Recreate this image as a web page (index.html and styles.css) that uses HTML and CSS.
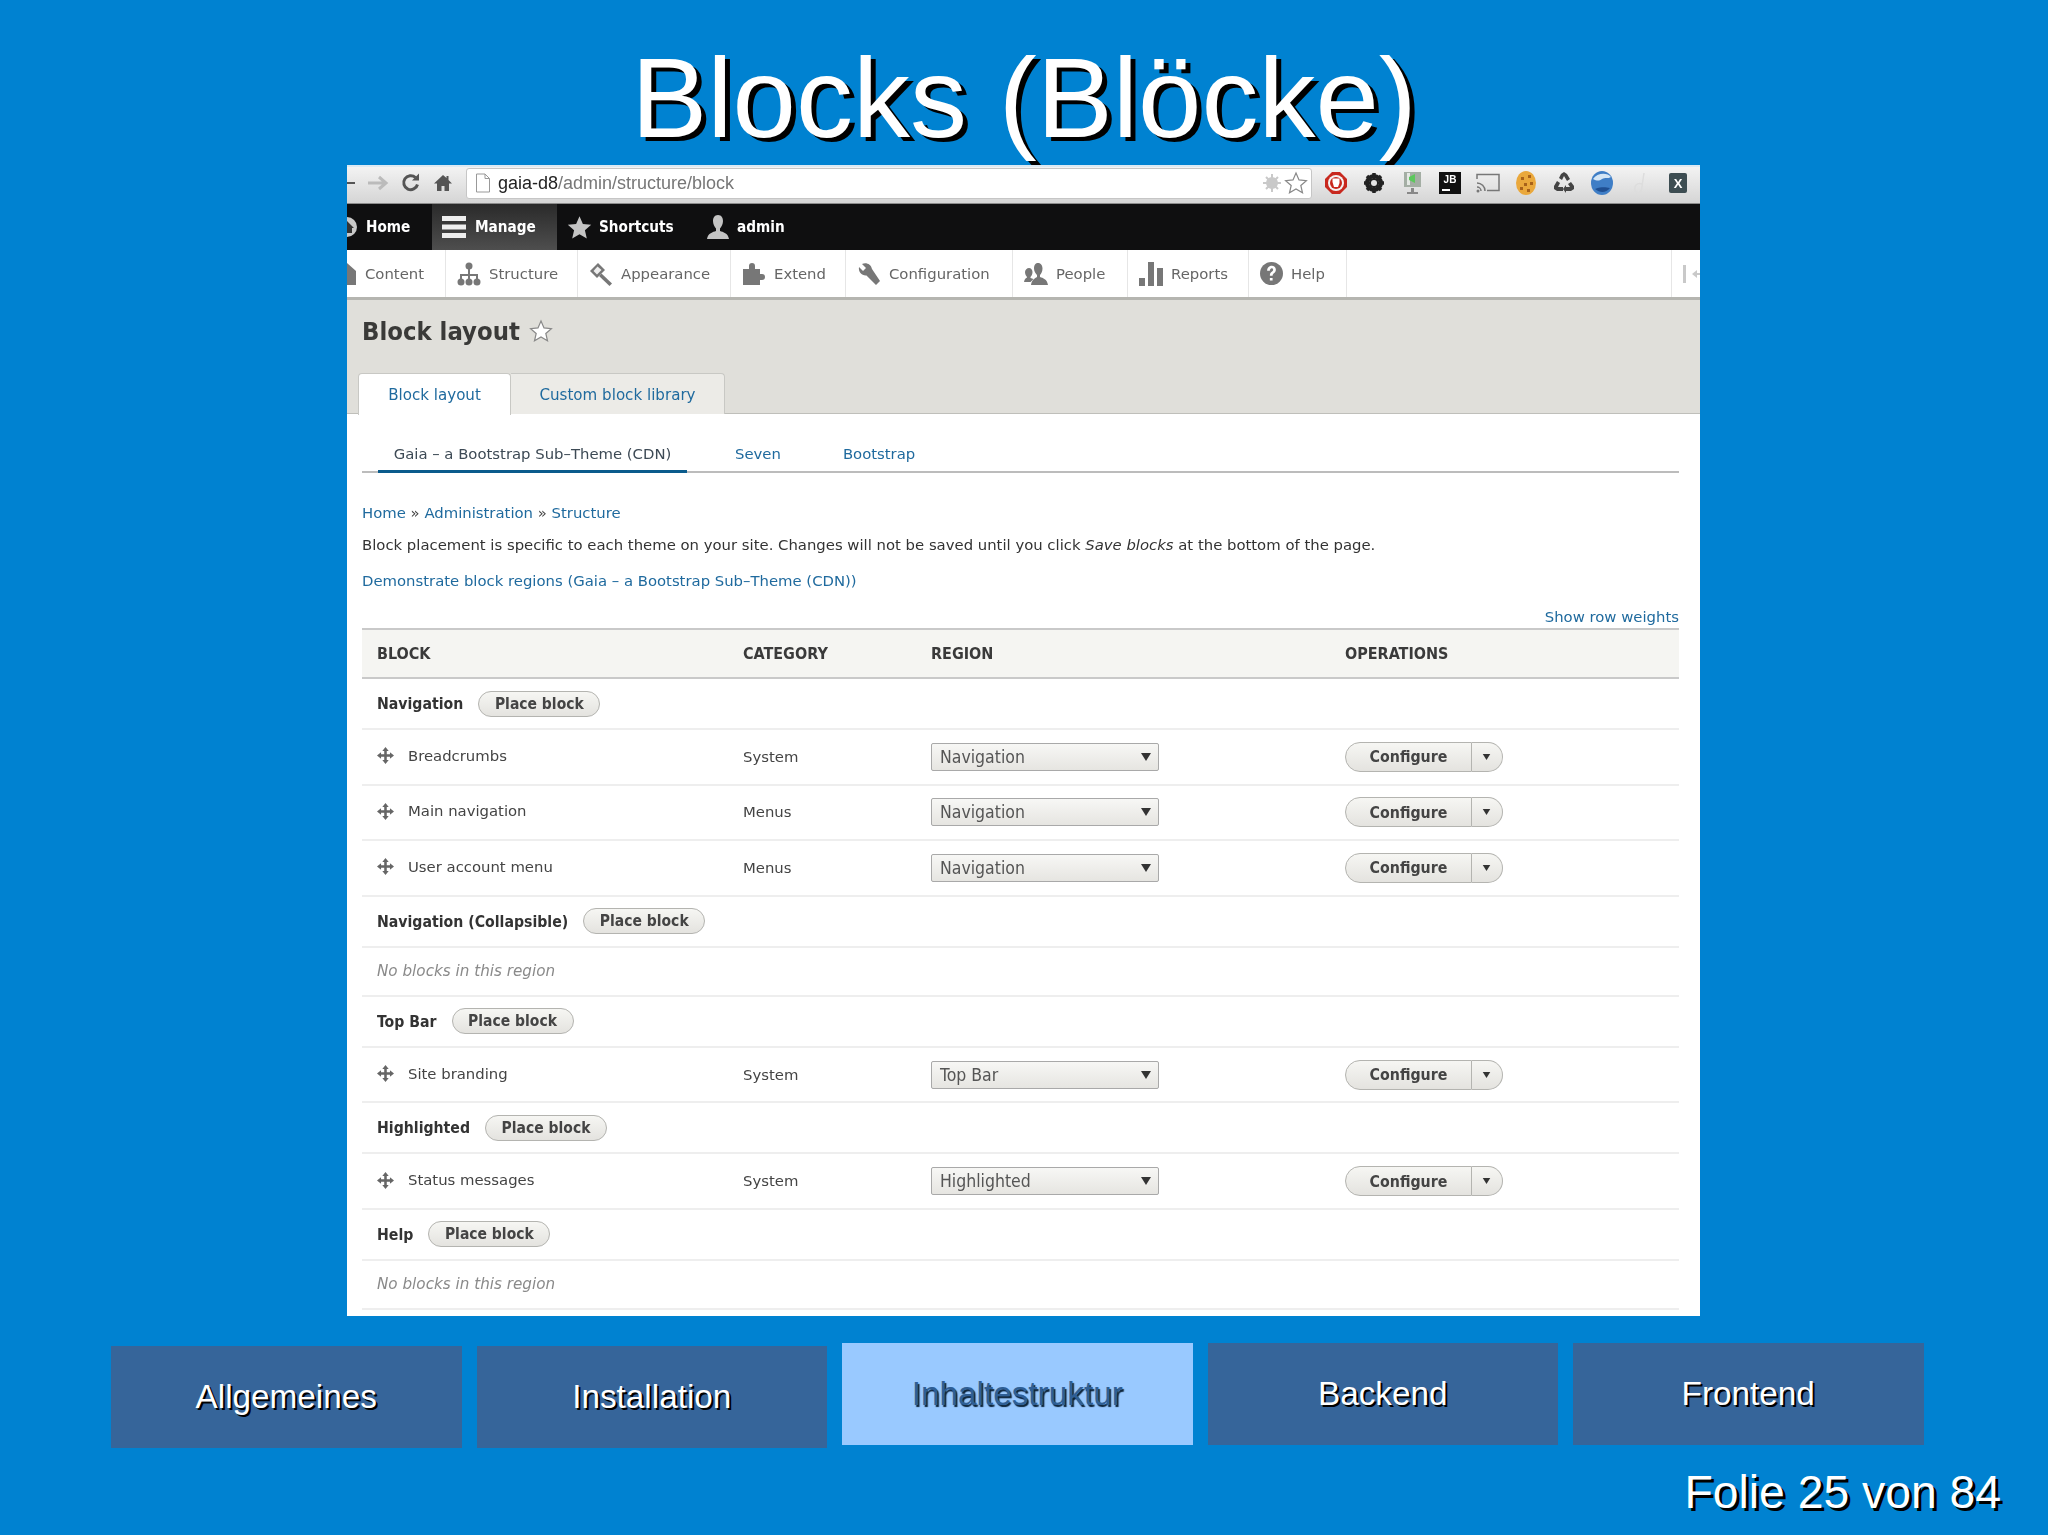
FILE: index.html
```html
<!DOCTYPE html>
<html lang="de">
<head>
<meta charset="utf-8">
<title>Blocks (Blöcke)</title>
<link rel="stylesheet" href="styles.css">
</head>
<body>
<svg class="defs" width="0" height="0" aria-hidden="true">
  <symbol id="drag" viewBox="0 0 16 16"><path d="M8 0l3 3.800H9.200v3H12.200V5l3.800 3-3.800 3V9.200H9.200v3H11L8 16l-3-3.800h1.800v-3H3.800V11L0 8l3.800-3v1.800h3v-3H5z" fill="#666"/></symbol>
  <symbol id="tri" viewBox="0 0 10 8"><path d="M0 0h10L5 8z" fill="#333"/></symbol>
  <symbol id="star" viewBox="0 0 24 24"><path d="M12 2l3 6.900 7.400.7-5.600 4.900 1.700 7.300L12 17.900l-6.500 3.900 1.700-7.300-5.600-4.900L9 8.900z"/></symbol>
</svg>
<main class="slide">
  <h1 class="title">Blocks (Blöcke)</h1>
  <section class="shot">
    <div class="chrome">
      <div class="nav-btns">
        <svg class="ic-cut" width="8" height="14" viewBox="0 0 8 14"><path d="M0 6h8v2H0z" fill="#555"/></svg>
        <svg width="22" height="18" viewBox="0 0 22 18"><path d="M1 9h17M12 3l7 6-7 6" fill="none" stroke="#bbb" stroke-width="3"/></svg>
        <svg width="20" height="20" viewBox="0 0 20 20"><path d="M16.500 11.500A7 7 0 1 1 14.500 4.500" fill="none" stroke="#555" stroke-width="3"/><path d="M11 7.500h7v-7z" fill="#555"/></svg>
        <svg width="20" height="20" viewBox="0 0 20 20"><path d="M10 2L1 10.500h3V18h4.500v-5h3v5H16v-7.500h3L15.500 7V3h-2v2z" fill="#555"/></svg>
      </div>
      <div class="url">
        <svg width="16" height="20" viewBox="0 0 16 20"><path d="M1.500 1h8.500l4.500 4.500V19h-13zM10 1v4.500h4.500" fill="#fff" stroke="#999"/></svg>
        <span class="url-text"><b class="url-host">gaia-d8</b>/admin/structure/block</span>
        <svg class="url-end" width="20" height="20" viewBox="0 0 20 20"><circle cx="10" cy="10" r="6" fill="#c9c9c9"/><path d="M10 1v18M1 10h18M4 4l12 12M16 4L4 16" stroke="#c9c9c9" stroke-width="2"/></svg>
        <svg class="star-o" width="24" height="24"><use href="#star"/></svg>
      </div>
      <div class="exts">
        <svg width="24" height="24" viewBox="0 0 24 24"><path d="M8 1h8l7 7v8l-7 7H8l-7-7V8z" fill="#c8281e"/><circle cx="12" cy="12" r="8" fill="#f3f3f3"/><circle cx="12" cy="12" r="6" fill="#c8281e"/><path d="M8.500 11V7.500h7V12l-1.500 4h-4z" fill="#fff"/></svg>
        <svg width="24" height="24" viewBox="0 0 24 24"><circle cx="12" cy="12" r="7" fill="none" stroke="#222" stroke-width="4"/><path d="M12 2v20M2 12h20M5 5l14 14M19 5L5 19" stroke="#222" stroke-width="3.500"/><circle cx="12" cy="12" r="3" fill="#e4e4e4"/></svg>
        <svg width="24" height="26" viewBox="0 0 24 26"><path d="M4 2h17v15H4z" fill="#a4aea4"/><path d="M7 3h3v12H7z" fill="#e4e8e4"/><path d="M9 7l6-3v9l-6-3z" fill="#5cc85c"/><path d="M11 18h3v4h4v2H7v-2h4z" fill="#888"/></svg>
        <svg width="22" height="22" viewBox="0 0 22 22"><path d="M0 0h22v22H0z" fill="#111"/><path d="M3 17h8v2H3z" fill="#fff"/><text class="jb" x="11" y="11" text-anchor="middle">JB</text></svg>
        <svg width="24" height="20" viewBox="0 0 24 20"><path d="M1 6V1.500h22v16H11" fill="none" stroke="#777" stroke-width="1.500"/><path d="M1 10a8 8 0 0 1 8 8M1 14a4 4 0 0 1 4 4" fill="none" stroke="#777" stroke-width="1.500"/><circle cx="2" cy="18" r="1.500" fill="#777"/></svg>
        <svg width="22" height="26" viewBox="0 0 22 26"><ellipse cx="11" cy="13" rx="10" ry="12" fill="#eaa83c"/><path d="M6 7h3v3H6zM13 5h3v3h-3zM9 13h3v3H9zM15 12h3v3h-3zM5 17h3v3H5zM12 19h3v3h-3z" fill="#a8621a"/></svg>
        <svg width="24" height="24" viewBox="0 0 24 24"><path d="M9 3l3-2 3 2 3 5-3 2-3-5-2 4-3-2zM2 15l3-5 3 2-2 4h5v4H5l-3-2zM22 15l-3-4-3 2 2 3h-4v-2l-3 4 3 4v-2h5l3-2z" fill="#444"/></svg>
        <svg width="24" height="26" viewBox="0 0 24 26"><ellipse cx="12" cy="13" rx="11" ry="12" fill="#3f7ec6"/><path d="M3 9c4-6 14-7 18-2-3 2-6 0-9 2s-5 2-9 0z" fill="#d5e6f5"/><path d="M5 19c5 4 11 4 15-1-4 0-6-2-15 1z" fill="#1f4f92"/></svg>
        <svg width="14" height="24" viewBox="0 0 14 24"><path d="M11 2L8 22M9 13C4 11 1 15 2 19s5 3 6 0" fill="none" stroke="#ddd" stroke-width="1.500"/></svg>
        <span class="ext-x">X</span>
      </div>
    </div>

    <nav class="toolbar">
      <a class="tb home"><svg class="tb-cut" width="20" height="20" viewBox="0 0 20 20"><circle cx="10" cy="10" r="10" fill="#c9c9c9"/><path d="M10 4l7 7h-2v5H5v-5H3z" fill="#333"/></svg>Home</a>
      <a class="tb manage"><svg width="24" height="22" viewBox="0 0 24 22"><path d="M0 0h24v5H0zM0 8.500h24v5H0zM0 17h24v5H0z" fill="#eee"/></svg>Manage</a>
      <a class="tb shortcuts"><svg class="tb-star" width="27" height="27"><use href="#star"/></svg>Shortcuts</a>
      <a class="tb user"><svg width="24" height="24" viewBox="0 0 24 24"><path d="M12 0c3.500 0 5 3 5 6 0 3-1.500 6-3 7.500V16c3 1 8 2 9 8H1c1-6 6-7 9-8v-2.500C8.500 12 7 9 7 6c0-3 1.500-6 5-6z" fill="#c4c4c4"/></svg>admin</a>
    </nav>

    <nav class="menu">
      <a class="mi first"><svg width="9" height="22" viewBox="0 0 9 22"><path d="M0 0l9 8v14H0z" fill="#777"/></svg>Content</a>
      <a class="mi"><svg width="24" height="24" viewBox="0 0 24 24"><circle cx="12" cy="4" r="3.500" fill="#777"/><path d="M11 4h2v8h8v7h-2v-5h-6v5h-2v-5H5v5H3v-7h8z" fill="#777"/><circle cx="4" cy="20" r="3.500" fill="#777"/><circle cx="12" cy="20" r="3.500" fill="#777"/><circle cx="20" cy="20" r="3.500" fill="#777"/></svg>Structure</a>
      <a class="mi"><svg width="24" height="24" viewBox="0 0 24 24"><path d="M9 1L1 9l7 7 8-8z" fill="#777"/><path d="M8.500 4.500L4.500 9 8 12.500 12.500 8z" fill="#eee"/><path d="M12.500 11.500L23 21.500 20.500 24 10 14z" fill="#777"/></svg>Appearance</a>
      <a class="mi"><svg width="24" height="24" viewBox="0 0 24 24"><path d="M1 7h6V4a3 3 0 0 1 6 0v3h5v5h2a3 3 0 0 1 0 6h-2v5H1z" fill="#777"/></svg>Extend</a>
      <a class="mi"><svg width="24" height="24" viewBox="0 0 24 24"><path d="M2 5l4 4 3-3-4-4c4-2 9 0 10 5L23 19l-4 4L9.500 13.500C5 14 1 10 2 5z" fill="#777"/></svg>Configuration</a>
      <a class="mi"><svg width="24" height="24" viewBox="0 0 24 24"><path d="M14 1c3 0 4.500 2.500 4.500 5.500S17 12 16 13v2c3 1 7 2 8 8H7c.6-5 4-7 6-8v-2c-1-1-3-3.500-3-6.500S11 1 14 1z" fill="#777"/><path d="M5 6c2 0 3.500 2 3.500 4s-1 4-2 5v1l3 1-3 3H0c.5-3 2-4 3-4.500V15c-1-1-2-3-2-5s2-4 4-4z" fill="#777"/></svg>People</a>
      <a class="mi"><svg width="24" height="24" viewBox="0 0 24 24"><path d="M0 16h6v8H0zM9 0h6v24H9zM18 6h6v18h-6z" fill="#777"/></svg>Reports</a>
      <a class="mi"><svg width="23" height="23" viewBox="0 0 21 21"><circle cx="10.500" cy="10.500" r="10.500" fill="#777"/><path d="M6.500 8c0-6 8-6 8-1 0 3-3 3-3 5.500H9c0-4 3-3.500 3-5.500 0-2-3-2-3 1zM9 14.500h2.500V17H9z" fill="#fff"/></svg>Help</a>
      <span class="mi-spacer"></span>
      <span class="mi-end"><svg width="22" height="20" viewBox="0 0 22 20"><path d="M2 1h3v18H2zM16 6v3h6v2h-6v3l-5-4z" fill="#c9c9c9"/></svg></span>
    </nav>

    <header class="page-head">
      <div class="page-title"><h2>Block layout</h2><svg class="star-o star-title" width="24" height="24"><use href="#star"/></svg></div>
      <ul class="tabs">
        <li class="tab active">Block layout</li>
        <li class="tab">Custom block library</li>
      </ul>
    </header>

    <div class="content">
      <ul class="subtabs">
        <li class="subtab active">Gaia – a Bootstrap Sub–Theme (CDN)</li>
        <li class="subtab">Seven</li>
        <li class="subtab">Bootstrap</li>
      </ul>
      <p class="crumbs"><a>Home</a> » <a>Administration</a> » <a>Structure</a></p>
      <p class="intro">Block placement is specific to each theme on your site. Changes will not be saved until you click <em>Save blocks</em> at the bottom of the page.</p>
      <p class="demo"><a>Demonstrate block regions (Gaia – a Bootstrap Sub–Theme (CDN))</a></p>
      <p class="weights"><a>Show row weights</a></p>
      <table class="blocks">
        <colgroup><col class="c1"><col class="c2"><col class="c3"><col class="c4"></colgroup>
        <thead><tr><th>BLOCK</th><th>CATEGORY</th><th>REGION</th><th>OPERATIONS</th></tr></thead>
        <tbody>
          <tr class="region"><td colspan="4"><div class="rg"><strong>Navigation</strong><span class="place">Place block</span></div></td></tr>
          <tr class="row"><td><div class="nm"><svg class="drag" width="17" height="17"><use href="#drag"/></svg>Breadcrumbs</div></td><td>System</td><td><div class="sel">Navigation<svg width="10" height="8"><use href="#tri"/></svg></div></td><td><div class="ops"><span class="cfg">Configure</span><span class="drop"><svg width="9" height="6"><use href="#tri"/></svg></span></div></td></tr>
          <tr class="row"><td><div class="nm"><svg class="drag" width="17" height="17"><use href="#drag"/></svg>Main navigation</div></td><td>Menus</td><td><div class="sel">Navigation<svg width="10" height="8"><use href="#tri"/></svg></div></td><td><div class="ops"><span class="cfg">Configure</span><span class="drop"><svg width="9" height="6"><use href="#tri"/></svg></span></div></td></tr>
          <tr class="row"><td><div class="nm"><svg class="drag" width="17" height="17"><use href="#drag"/></svg>User account menu</div></td><td>Menus</td><td><div class="sel">Navigation<svg width="10" height="8"><use href="#tri"/></svg></div></td><td><div class="ops"><span class="cfg">Configure</span><span class="drop"><svg width="9" height="6"><use href="#tri"/></svg></span></div></td></tr>
          <tr class="region"><td colspan="4"><div class="rg"><strong>Navigation (Collapsible)</strong><span class="place">Place block</span></div></td></tr>
          <tr class="empty"><td colspan="4">No blocks in this region</td></tr>
          <tr class="region"><td colspan="4"><div class="rg"><strong>Top Bar</strong><span class="place">Place block</span></div></td></tr>
          <tr class="row"><td><div class="nm"><svg class="drag" width="17" height="17"><use href="#drag"/></svg>Site branding</div></td><td>System</td><td><div class="sel">Top Bar<svg width="10" height="8"><use href="#tri"/></svg></div></td><td><div class="ops"><span class="cfg">Configure</span><span class="drop"><svg width="9" height="6"><use href="#tri"/></svg></span></div></td></tr>
          <tr class="region"><td colspan="4"><div class="rg"><strong>Highlighted</strong><span class="place">Place block</span></div></td></tr>
          <tr class="row"><td><div class="nm"><svg class="drag" width="17" height="17"><use href="#drag"/></svg>Status messages</div></td><td>System</td><td><div class="sel">Highlighted<svg width="10" height="8"><use href="#tri"/></svg></div></td><td><div class="ops"><span class="cfg">Configure</span><span class="drop"><svg width="9" height="6"><use href="#tri"/></svg></span></div></td></tr>
          <tr class="region"><td colspan="4"><div class="rg"><strong>Help</strong><span class="place">Place block</span></div></td></tr>
          <tr class="empty"><td colspan="4">No blocks in this region</td></tr>
        </tbody>
      </table>
    </div>
  </section>

  <nav class="tiles">
    <a class="tile low">Allgemeines</a>
    <a class="tile low">Installation</a>
    <a class="tile current">Inhaltestruktur</a>
    <a class="tile">Backend</a>
    <a class="tile">Frontend</a>
  </nav>
  <p class="counter">Folie 25 von 84</p>
</main>
</body>
</html>
```

FILE: styles.css
```css
* { box-sizing: border-box; }
html, body { margin: 0; padding: 0; }
body { background: #0082d1; font-family: "Liberation Sans", Arial, sans-serif; }
.defs { position: absolute; }
.slide { width: 2048px; height: 1535px; overflow: hidden; background: #0082d1; }

.title {
  margin: 0; height: 165px; padding-top: 23px;
  font-size: 114px; line-height: 150px; font-weight: 400;
  text-align: center; color: #fff; text-shadow: 5px 4px 0 #000;
  white-space: nowrap;
}

/* embedded browser screenshot */
.shot {
  position: relative; margin-left: 347px; width: 1353px; height: 1151px;
  overflow: hidden; background: #fff; color: #333;
  font-family: "DejaVu Sans", sans-serif;
  font-size: 14.850px;
  filter: blur(0.45px);
}
.shot ul { list-style: none; margin: 0; padding: 0; }
.shot p { margin: 0; }
.shot svg { flex: none; display: block; }

.chrome {
  height: 39px; display: flex; align-items: center; padding-bottom: 4px;
  background: linear-gradient(#f3f3f3, #d5d5d5);
  border-bottom: 1px solid #8c8c8c; border-top: 2px solid #dbe9f3;
}
.nav-btns { display: flex; align-items: center; gap: 12px; width: 119px; }
.url {
  width: 846px; height: 31px; display: flex; align-items: center; gap: 7px;
  background: #fff; border: 1px solid #c6c6c6; border-radius: 3px; padding: 0 3px 0 8px;
}
.url-text { font-family: "Liberation Sans", sans-serif; font-size: 18px; color: #777; }
.url-host { font-weight: 400; color: #222; }
.url-end { margin-left: auto; margin-right: -5px; }
.star-o { fill: #fff; stroke: #888; stroke-width: 1.2; }
.exts { display: grid; grid-template-columns: repeat(10, 38px); justify-items: center; align-items: center; padding-left: 5px; }
.jb { font-family: "Liberation Sans", sans-serif; font-size: 10px; font-weight: 700; fill: #fff; }
.ext-x {
  width: 18px; height: 20px; border-radius: 2px; background: #3d4d52; color: #fff;
  display: flex; align-items: center; justify-content: center;
  font-family: "Liberation Sans", sans-serif; font-size: 13px; font-weight: 700;
}

.toolbar {
  height: 46px; display: flex; align-items: stretch; background: #0f0f10; color: #fff;
  font-family: "DejaVu Sans Condensed", "DejaVu Sans", sans-serif; font-weight: 700; font-size: 15.200px;
}
.tb { display: flex; align-items: center; gap: 9px; }
.home { width: 85px; }
.tb-cut { margin-left: -10px; }
.manage { width: 125px; padding-left: 10px; background: linear-gradient(#2a2a2a, #4e4e4e); }
.shortcuts { width: 149px; padding-left: 9px; gap: 6px; }
.tb-star { fill: #c4c4c4; }
.user { gap: 7px; }

.menu {
  height: 50px; display: grid;
  grid-template-columns: 99px 132px 153px 115px 167px 115px 121px 98px 1fr 29px;
  background: #fff; border-bottom: 3px solid #b5b5b0; color: #666;
}
.mi { display: flex; align-items: center; gap: 8px; padding-left: 11px; border-right: 1px solid #e6e6e6; }
.mi.first { padding-left: 0; gap: 9px; }
.mi-end { display: flex; align-items: center; padding-left: 9px; border-left: 1px solid #e6e6e6; overflow: hidden; }

.page-head { height: 114px; background: #e0dfda; border-bottom: 1px solid #bfbfba; padding-left: 15px; }
.page-title { display: flex; align-items: center; gap: 9px; height: 62px; }
.page-title h2 {
  margin: 0; font-family: "DejaVu Sans Condensed", "DejaVu Sans", sans-serif;
  font-size: 25.400px; font-weight: 700; color: #3a3a38;
}
.shot .tabs { display: flex; margin: 11px 0 0 -4px; height: 41px; font-size: 15.100px; }
.tab {
  width: 214px; display: flex; align-items: center; justify-content: center; padding-top: 1px;
  background: #ecebe7; border: 1px solid #c8c8c4; border-bottom: 0; border-left: 0;
  border-radius: 0 4px 0 0; color: #1f6a9e;
}
.tab.active { width: 153px; background: #fff; border-left: 1px solid #c8c8c4; border-radius: 4px 4px 0 0; height: 42px; }

.content { padding: 0 21px 0 15px; }
.shot .subtabs { display: flex; height: 59px; border-bottom: 2px solid #bcbcbc; padding-left: 16px; }
.subtab {
  display: flex; align-items: flex-end; height: 59px; padding-bottom: 7px;
  border-bottom: 3px solid transparent; color: #1f6a9e; margin-right: 62px;
}
.subtab.active { width: 309px; justify-content: center; color: #3d4a55; border-bottom-color: #0a5b8c; margin-right: 48px; }
.shot p.crumbs, .shot p.intro, .shot p.demo, .shot p.weights { line-height: 20px; }
.shot p.crumbs { margin-top: 30px; color: #444; }
.shot a { color: #1f6a9e; text-decoration: none; }
.shot .tb, .shot .mi { color: inherit; }
.shot p.intro { margin-top: 12px; color: #333; }
.shot p.demo { margin-top: 16px; }
.shot p.weights { margin-top: 16px; text-align: right; }

.blocks { width: 100%; margin-top: 1px; border-collapse: collapse; table-layout: fixed; font-size: 14.850px; }
.c1 { width: 366px; } .c2 { width: 188px; } .c3 { width: 414px; }
.blocks th {
  height: 49px; background: #f5f5f2; text-align: left; padding: 0 0 0 15px;
  border-top: 2px solid #c9c9c9; border-bottom: 2px solid #c9c9c9;
  font-family: "DejaVu Sans Condensed", "DejaVu Sans", sans-serif; font-size: 16px; font-weight: 700; color: #3a3a3a;
}
.blocks td { padding: 0 0 0 15px; border-bottom: 2px solid #eeeeee; color: #444; }
.region td { height: 51px; color: #333; }
.row td { height: 55.600px; }
.empty td { height: 49px; font-size: 15.200px; font-style: italic; color: #8a8a8a; }
.rg { display: flex; align-items: center; gap: 15px; font-family: "DejaVu Sans Condensed", "DejaVu Sans", sans-serif; }
.rg strong { font-size: 15.700px; font-weight: 700; color: #333; }
.place {
  height: 26px; width: 122px; display: flex; align-items: center; justify-content: center;
  border: 1px solid #b4b4b0; border-radius: 13px; background: linear-gradient(#f6f6f3, #e4e3df);
  font-size: 15.500px; font-weight: 700; color: #444;
}
.nm { display: flex; align-items: center; gap: 14px; margin-top: -2px; }
.sel {
  width: 228px; height: 28px; padding: 0 7px 0 8px; display: flex; align-items: center; justify-content: space-between;
  border: 1px solid #a9a9a9; border-radius: 2px; background: linear-gradient(#f7f7f5, #e6e5e1);
  font-family: "DejaVu Sans Condensed", "DejaVu Sans", sans-serif; font-size: 17.500px; color: #555;
}
.ops { display: flex; height: 30px; font-family: "DejaVu Sans Condensed", "DejaVu Sans", sans-serif; font-size: 15.800px; font-weight: 700; color: #444; }
.cfg {
  width: 127px; display: flex; align-items: center; justify-content: center;
  border: 1px solid #b4b4b0; border-radius: 15px 0 0 15px; background: linear-gradient(#f6f6f3, #e4e3df);
}
.drop {
  width: 31px; display: flex; align-items: center; justify-content: center; padding-right: 2px;
  border: 1px solid #b4b4b0; border-left: 0; border-radius: 0 15px 15px 0; background: linear-gradient(#f6f6f3, #e4e3df);
}

/* slide navigation */
.tiles { display: flex; gap: 15px; height: 105px; margin: 27px 0 0 111px; }
.tile {
  width: 350.500px; height: 102px; display: flex; align-items: center; justify-content: center;
  background: #36659a; color: #fff; font-size: 33.300px; text-shadow: 2px 2px 0 #000;
}
.tile.low { margin-top: 3px; }
.tile.current { background: #99c9ff; color: #2f5f95; text-shadow: 1.500px 1.500px 1px #0b2238; }
.counter {
  margin: 14px 0 0; padding-right: 47px; text-align: right;
  font-size: 46.300px; line-height: 60px; color: #fff; text-shadow: 3px 3px 0 #000;
}
```
